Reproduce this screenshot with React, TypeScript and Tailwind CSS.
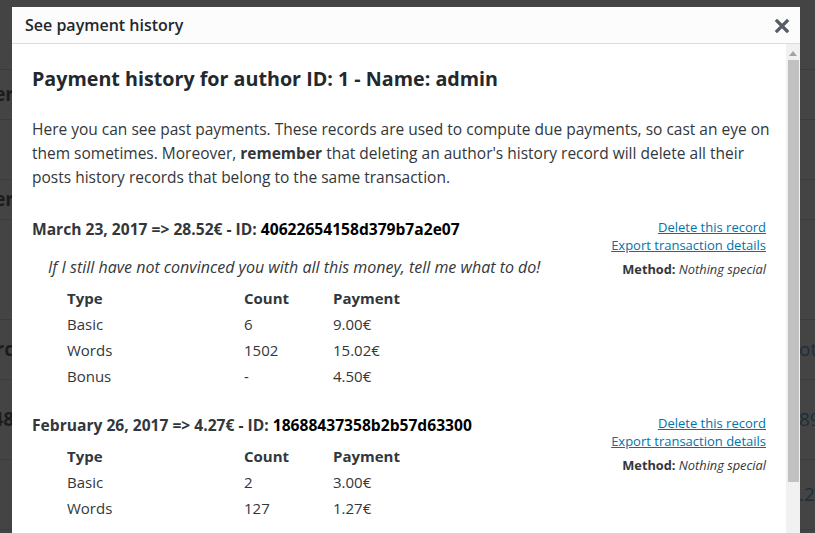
import React from "react";

type Row = { type: string; count: string; payment: string };
type Record = {
  date: string;
  amount: string;
  id: string;
  note?: string;
  rows: Row[];
};

const records: Record[] = [
  {
    date: "March 23, 2017",
    amount: "28.52€",
    id: "40622654158d379b7a2e07",
    note: "If I still have not convinced you with all this money, tell me what to do!",
    rows: [
      { type: "Basic", count: "6", payment: "9.00€" },
      { type: "Words", count: "1502", payment: "15.02€" },
      { type: "Bonus", count: "-", payment: "4.50€" },
    ],
  },
  {
    date: "February 26, 2017",
    amount: "4.27€",
    id: "18688437358b2b57d63300",
    rows: [
      { type: "Basic", count: "2", payment: "3.00€" },
      { type: "Words", count: "127", payment: "1.27€" },
    ],
  },
];

const font = { fontFamily: '"Open Sans", "Noto Sans", sans-serif' };

function PageBehind() {
  // dimmed admin table sitting under the overlay
  const rows = [
    { h: 70, left: "", right: "" },
    { h: 50, left: "er", right: "" },
    { h: 60, left: "", right: "" },
    { h: 40, left: "er", right: "" },
    { h: 100, left: "", right: "" },
    { h: 60, left: "rc", right: "ot" },
    { h: 80, left: "48", right: "89" },
    { h: 70, left: "", right: ".2" },
    { h: 80, left: "", right: "ot" },
  ];
  return (
    <div className="w-[815px] h-[533px] overflow-hidden bg-[#444444]" style={font}>
      {rows.map((r, i) => (
        <div
          key={i}
          className="flex items-center justify-between border-b border-[#3b3b3b]"
          style={{ height: r.h }}
        >
          <div className="w-[14px] overflow-hidden flex justify-end">
            <span className="text-[19px] font-bold text-[#1c1c1c] whitespace-nowrap">{r.left}</span>
          </div>
          <div className="w-[16px] overflow-hidden">
            <span className="text-[19px] text-[#1b2f3c] whitespace-nowrap">{r.right}</span>
          </div>
        </div>
      ))}
    </div>
  );
}

function RecordBlock({ rec }: { rec: Record }) {
  return (
    <div className="flex justify-between items-start">
      <div>
        <h3 className="text-[15.6px] leading-6 font-bold text-[#32373c]">
          {rec.date} =&gt; {rec.amount} - ID: <span className="text-black">{rec.id}</span>
        </h3>
        {rec.note && (
          <p className="mt-[14px] ml-4 text-[16px] leading-6 italic text-[#32373c]">{rec.note}</p>
        )}
        <table className="mt-[6px] ml-[35px] text-[15px] text-[#32373c]">
          <thead>
            <tr className="h-[26px]">
              <th className="w-[177px] text-left font-bold p-0">Type</th>
              <th className="w-[89px] text-left font-bold p-0">Count</th>
              <th className="text-left font-bold p-0">Payment</th>
            </tr>
          </thead>
          <tbody>
            {rec.rows.map((r) => (
              <tr key={r.type} className="h-[26px]">
                <td className="p-0">{r.type}</td>
                <td className="p-0">{r.count}</td>
                <td className="p-0">{r.payment}</td>
              </tr>
            ))}
          </tbody>
        </table>
      </div>
      <div className="text-right text-[13px] leading-[18px] pt-px">
        <a href="#" className="block text-[#0073aa] underline">Delete this record</a>
        <a href="#" className="block text-[#0073aa] underline">Export transaction details</a>
        <div className="mt-[6px] text-[12.8px] text-[#32373c]">
          <span className="font-bold">Method: </span>
          <em>Nothing special</em>
        </div>
      </div>
    </div>
  );
}

export default function App() {
  return (
    <div className="relative w-[815px] h-[533px] overflow-hidden">
      <PageBehind />
      <div
        className="absolute left-[12px] top-[7px] w-[788px] h-[540px] bg-white flex flex-col"
        style={font}
      >
        <div className="h-[37px] shrink-0 bg-[#fcfcfc] border-b border-[#dddddd] flex items-center justify-between pl-[13px] pr-[10px]">
          <span className="text-[16px] font-semibold text-[#23282d]">See payment history</span>
          <svg width="16" height="16" viewBox="0 0 16 16" className="mt-px">
            <path d="M3 3 L13 13 M13 3 L3 13" stroke="#555d66" strokeWidth="3.2" strokeLinecap="square" />
          </svg>
        </div>
        <div className="flex flex-1 min-h-0">
          <div className="flex-1 pl-5 pr-5 pt-[21px] text-[#32373c]">
            <h2 className="text-[19.7px] leading-7 font-bold text-[#23282d]">
              Payment history for author ID: 1 - Name: admin
            </h2>
            <p className="mt-[24px] -mr-4 text-[15.5px] leading-6 text-[#32373c]">
              Here you can see past payments. These records are used to compute due payments, so cast an eye on
              them sometimes. Moreover, <strong>remember</strong> that deleting an author's history record will
              delete all their posts history records that belong to the same transaction.
            </p>
            <div className="mt-[28px] flex flex-col gap-6">
              {records.map((rec) => (
                <RecordBlock key={rec.id} rec={rec} />
              ))}
            </div>
          </div>
          <div className="w-[14px] shrink-0 bg-[#f1f1f1] flex flex-col items-center pt-[7px]">
            <svg width="8" height="5" viewBox="0 0 8 5">
              <path d="M0 5 L4 0 L8 5 Z" fill="#a3a3a3" />
            </svg>
            <div className="mt-[4px] w-[11px] h-[422px] bg-[#c1c1c1]" />
          </div>
        </div>
      </div>
    </div>
  );
}
